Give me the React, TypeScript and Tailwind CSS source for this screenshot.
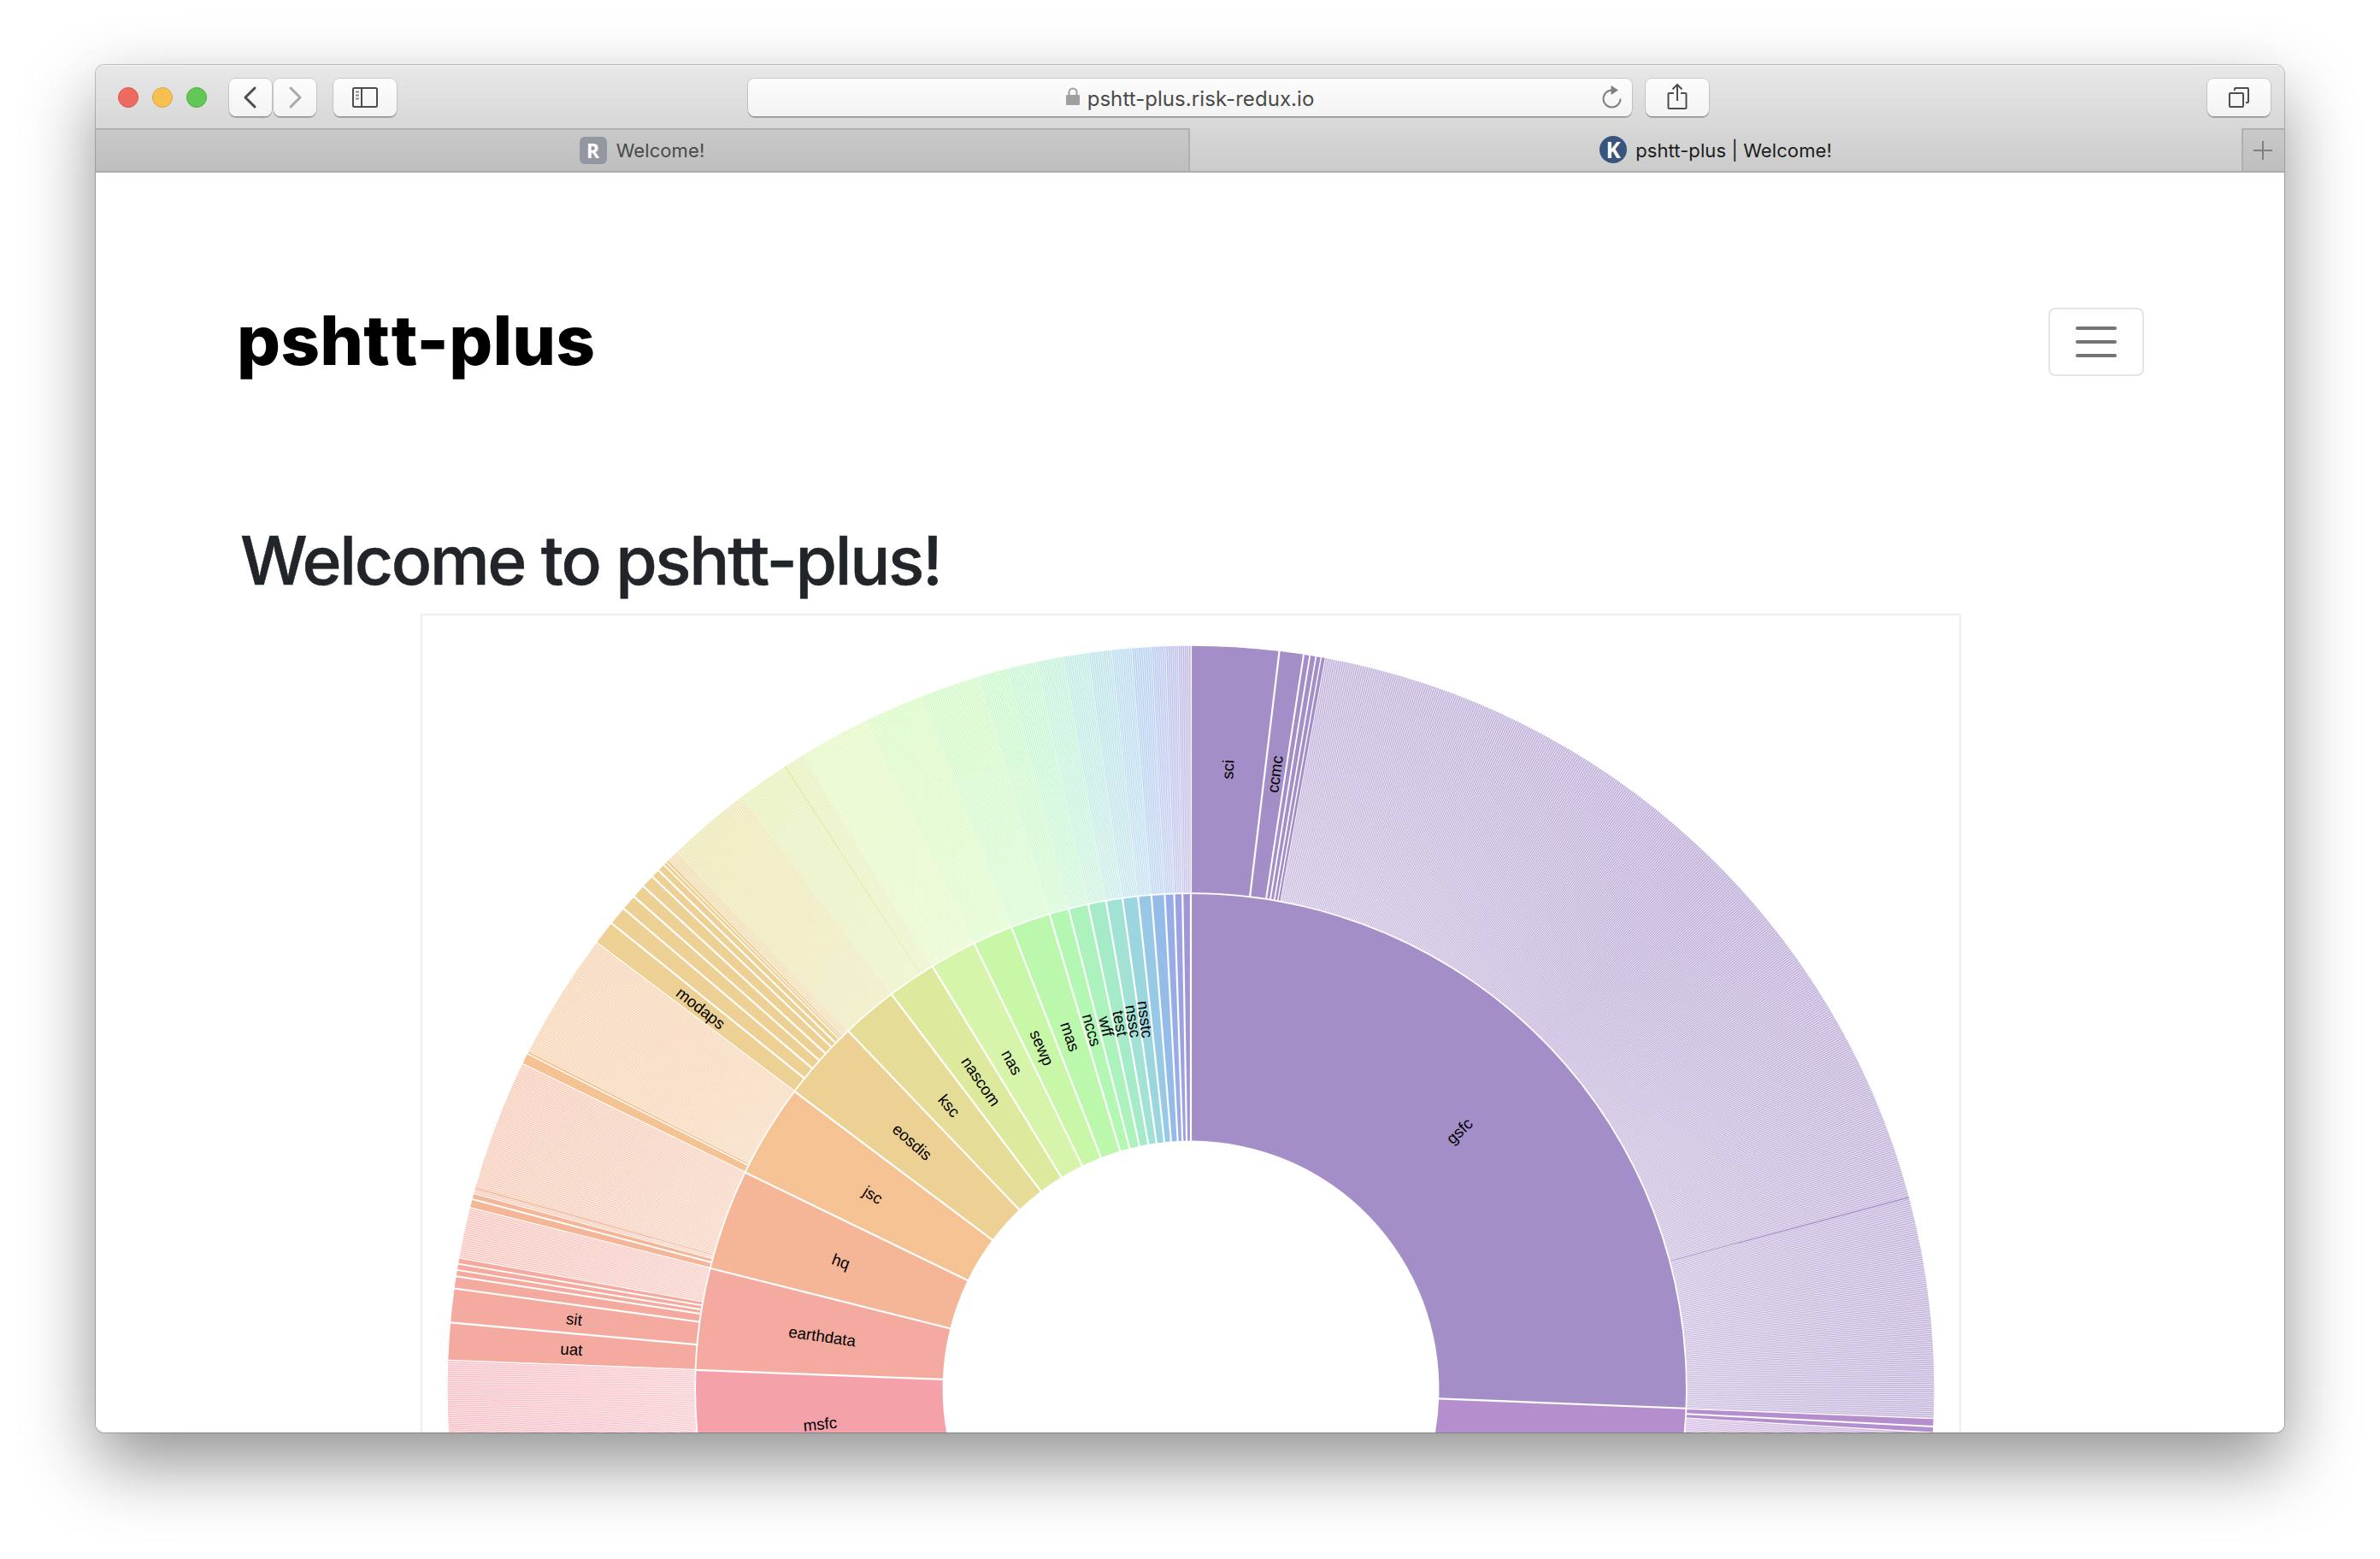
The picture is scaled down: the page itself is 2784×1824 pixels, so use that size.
import type { ReactNode } from "react";

type Rgb = [number, number, number];

const RADIUS = 290.4;
const GAP = 1.87;
const PAD_RADIUS = RADIUS * 1.5;
const LEAF_DEG = 0.16304;
const COLOR_COUNT = 26;
const RAD = Math.PI / 180;

/** Cyclic cubehelix rainbow, t in [0, 1]. */
function rainbow(t: number): Rgb {
  const ts = Math.abs(t - 0.5);
  const h = (360 * t - 100 + 120) * RAD;
  const s = 1.5 - 1.5 * ts;
  const l = 0.8 - 0.9 * ts;
  const a = s * l * (1 - l);
  const c = Math.cos(h);
  const n = Math.sin(h);
  return [
    l + a * (-0.14861 * c + 1.78277 * n),
    l + a * (-0.29227 * c - 0.90649 * n),
    l + a * (1.97294 * c),
  ];
}

const toLinear = (v: number) => (v <= 0.04045 ? v / 12.92 : Math.pow((v + 0.055) / 1.055, 2.4));
const toGamma = (v: number) => (v <= 0.0031308 ? v * 12.92 : 1.055 * Math.pow(v, 1 / 2.4) - 0.055);

/** Slice colour, muted into the wide-gamut display space. */
function sliceColor(index: number): string {
  const [r, g, b] = rainbow(index / COLOR_COUNT).map((v) => toLinear(Math.min(1, Math.max(0, v))));
  const wide = [0.8225 * r + 0.1774 * g, 0.0332 * r + 0.9669 * g, 0.0171 * r + 0.0724 * g + 0.9108 * b];
  return `rgb(${wide.map((v) => Math.round(255 * toGamma(v))).join(",")})`;
}

const point = (r: number, a: number) => `${(r * Math.sin(a)).toFixed(3)},${(-r * Math.cos(a)).toFixed(3)}`;

/** Annular sector, padded unless told otherwise; angles in degrees clockwise from twelve o'clock. */
function arc(a0: number, a1: number, ring: number, padded = true): string {
  const r0 = RADIUS * ring;
  const r1 = RADIUS * (ring + 1) - GAP;
  const x0 = a0 * RAD;
  const x1 = a1 * RAD;
  const half = padded ? Math.min((x1 - x0) / 2, 0.005) / 2 : 0;
  const pi = Math.asin((PAD_RADIUS / r0) * Math.sin(half));
  const po = Math.asin((PAD_RADIUS / r1) * Math.sin(half));
  return `M${point(r1, x0 + po)}A${r1},${r1} 0 0 1 ${point(r1, x1 - po)}L${point(r0, x1 - pi)}A${r0},${r0} 0 0 0 ${point(r0, x0 + pi)}Z`;
}

/** Radial separators between the single-host leaves of a run. */
function separators(a0: number, a1: number): string {
  const count = Math.max(1, Math.round((a1 - a0) / LEAF_DEG));
  const step = (a1 - a0) / count;
  let d = "";
  for (let i = 0; i <= count; i++) {
    const a = (a0 + i * step) * RAD;
    d += `M${point(RADIUS * 2, a)}L${point(RADIUS * 3 - GAP, a)}`;
  }
  return d;
}

interface Slice {
  index: number;
  from: number;
  to: number;
  name?: string;
  groups?: { from: number; to: number; name?: string }[];
}

const slices: Slice[] = [
  {
    index: 0, from: 0, to: 92.25, name: "gsfc",
    groups: [
      { from: 0, to: 6.84, name: "sci" },
      { from: 6.84, to: 8.74, name: "ccmc" },
      { from: 8.74, to: 9.22 },
      { from: 9.22, to: 9.7 },
      { from: 9.7, to: 10.1 },
      { from: 10.1, to: 10.43 },
      { from: 74.98, to: 75.14 },
    ],
  },
  { index: 1, from: 92.25, to: 120, groups: [{ from: 92.25, to: 92.9 }, { from: 92.9, to: 93.4 }] },
  { index: 6, from: 257, to: 272.19, name: "msfc" },
  {
    index: 7, from: 272.19, to: 284.1, name: "earthdata",
    groups: [
      { from: 272.19, to: 275.12, name: "uat" },
      { from: 275.12, to: 277.77, name: "sit" },
      { from: 277.77, to: 278.72 },
      { from: 278.72, to: 279.21 },
      { from: 279.21, to: 279.7 },
      { from: 279.7, to: 280.16 },
    ],
  },
  {
    index: 8, from: 284.1, to: 295.92, name: "hq",
    groups: [{ from: 284.1, to: 284.8 }, { from: 284.8, to: 285.26 }, { from: 285.59, to: 285.76 }],
  },
  {
    index: 9, from: 295.92, to: 306.89, name: "jsc",
    groups: [{ from: 295.92, to: 296.83 }, { from: 296.83, to: 297.04 }],
  },
  {
    index: 10, from: 306.89, to: 316.25, name: "eosdis",
    groups: [
      { from: 306.89, to: 308.8, name: "modaps" },
      { from: 308.8, to: 310.26 },
      { from: 310.26, to: 311.49 },
      { from: 311.49, to: 312.56 },
      { from: 312.56, to: 313.57 },
      { from: 313.57, to: 314.25 },
      { from: 314.25, to: 314.86 },
      { from: 314.86, to: 315.12 },
      { from: 315.12, to: 315.38 },
    ],
  },
  { index: 11, from: 316.25, to: 322.82, name: "ksc" },
  { index: 12, from: 322.82, to: 328.55, name: "nascom", groups: [{ from: 326.82, to: 326.98 }] },
  { index: 13, from: 328.55, to: 334.06, name: "nas" },
  { index: 14, from: 334.06, to: 338.77, name: "sewp" },
  { index: 15, from: 338.77, to: 343.42, name: "mas" },
  { index: 16, from: 343.42, to: 345.71, name: "nccs" },
  { index: 17, from: 345.71, to: 348.03, name: "wff" },
  { index: 18, from: 348.03, to: 350.13, name: "test" },
  { index: 19, from: 350.13, to: 352.06, name: "nssc" },
  { index: 20, from: 352.06, to: 353.87, name: "nsstc" },
  { index: 21, from: 353.87, to: 355.43 },
  { index: 22, from: 355.43, to: 356.97 },
  { index: 23, from: 356.97, to: 358.07 },
  { index: 24, from: 358.07, to: 359.03 },
  { index: 25, from: 359.03, to: 360 },
];

/** Stretches of the outer ring that hold leaves instead of groups. */
function leafRuns(slice: Slice): [number, number][] {
  let cursor = slice.from;
  const out: [number, number][] = [];
  for (const g of slice.groups ?? []) {
    if (g.from - cursor > 0.05) out.push([cursor, g.from]);
    cursor = g.to;
  }
  if (slice.to - cursor > 0.05) out.push([cursor, slice.to]);
  return out;
}

function Label({ from, to, ring, children }: { from: number; to: number; ring: number; children: ReactNode }) {
  const mid = (from + to) / 2;
  return (
    <text
      dy="0.35em"
      textAnchor="middle"
      transform={`rotate(${mid - 90}) translate(${(ring + 0.5) * RADIUS},0) rotate(${mid < 180 ? 0 : 180})`}
    >
      {children}
    </text>
  );
}

function Sunburst() {
  return (
    <svg width="1798" height="956" viewBox="-899 -905 1798 956" className="block font-['Liberation_Sans',sans-serif] text-[18.7px]">
      {slices.map((s) => (
        <g key={s.index} fill={sliceColor(s.index)}>
          <path d={arc(s.from, s.to, 1)} fillOpacity={0.6} />
          {leafRuns(s).map(([a, b]) => (
            <g key={a}>
              <path d={arc(a, b, 2, false)} fillOpacity={0.4} />
              <path d={separators(a, b)} fill="none" stroke="#fff" strokeWidth={0.68} />
            </g>
          ))}
          {s.groups?.map((g) => <path key={g.from} d={arc(g.from, g.to, 2)} fillOpacity={0.6} />)}
        </g>
      ))}
      <g fill="#000">
        {slices.map((s) => (
          <g key={s.index}>
            {s.name && <Label from={s.from} to={s.to} ring={1}>{s.name}</Label>}
            {s.groups?.map((g) => g.name && <Label key={g.name} from={g.from} to={g.to} ring={2}>{g.name}</Label>)}
          </g>
        ))}
      </g>
    </svg>
  );
}

function ToolButton({ className, children }: { className: string; children: ReactNode }) {
  return (
    <div
      className={`flex h-[44px] items-center justify-center rounded-[8px] bg-linear-to-b from-[#fdfdfd] to-[#f3f3f3] shadow-[0_0_0_1px_rgba(0,0,0,0.13),0_2px_0_rgba(0,0,0,0.22)] ${className}`}
    >
      {children}
    </div>
  );
}

function Toolbar() {
  return (
    <div className="flex h-[74px] items-start pt-4 pl-[26px] text-[#4d4d4d]">
      <div className="flex h-[44px] items-center gap-4">
        <div className="size-6 rounded-full border border-[#d9574b] bg-[#ed6b60]" />
        <div className="size-6 rounded-full border border-[#dba53f] bg-[#f5c150]" />
        <div className="size-6 rounded-full border border-[#50ac42] bg-[#62c756]" />
      </div>
      <ToolButton className="ml-[26px] w-[50px]">
        <svg width="24" height="30" viewBox="0 0 24 30" fill="none" stroke="#4d4d4d" strokeWidth="3" strokeLinecap="round" strokeLinejoin="round">
          <path d="M17 4 6 15l11 11" />
        </svg>
      </ToolButton>
      <ToolButton className="ml-0.5 w-[50px]">
        <svg width="24" height="30" viewBox="0 0 24 30" fill="none" stroke="#a9a9a9" strokeWidth="3" strokeLinecap="round" strokeLinejoin="round">
          <path d="M7 4l11 11L7 26" />
        </svg>
      </ToolButton>
      <ToolButton className="ml-5 w-[74px]">
        <svg width="30" height="24" viewBox="0 0 30 24" fill="none" stroke="#4d4d4d" strokeWidth="2">
          <rect x="1" y="1" width="28" height="22" rx="1.5" />
          <path d="M11 1v22" />
          <path d="M4 5.5h4M4 9.5h4M4 13.5h4" stroke="#8a8a8a" />
        </svg>
      </ToolButton>
      <ToolButton className="relative ml-[411px] w-[1034px]">
        <svg width="16" height="22" viewBox="0 0 16 22" className="-mt-0.5 mr-[9px]">
          <path d="M3.5 10V6a4.5 4.5 0 0 1 9 0v4" fill="none" stroke="#a0a0a0" strokeWidth="2" />
          <rect x="0" y="9" width="16" height="12" rx="1" fill="#a0a0a0" />
        </svg>
        <span className="pt-[3px] font-['Inter',sans-serif] text-[24px] leading-[41px] tracking-[0.06px] whitespace-nowrap text-[#4a4a4a]">pshtt-plus.risk-redux.io</span>
        <svg width="26" height="28" viewBox="0 0 26 28" className="absolute top-[8px] right-[11px]">
          <path d="M13.5 5.5a10 10 0 1 0 10 10" fill="none" stroke="#808080" strokeWidth="2" />
          <path d="M12.5 0v11l8.500-5.500z" fill="#808080" />
        </svg>
      </ToolButton>
      <ToolButton className="ml-4 w-[74px]">
        <svg width="24" height="32" viewBox="0 0 24 32" className="-mt-0.5" fill="none" stroke="#4d4d4d" strokeWidth="2">
          <path d="M8 12H2.500a1 1 0 0 0-1 1v16a1 1 0 0 0 1 1h19a1 1 0 0 0 1-1V13a1 1 0 0 0-1-1H16M12 21V2M6.500 7.500 12 2l5.500 5.500" />
        </svg>
      </ToolButton>
      <ToolButton className="ml-[583px] w-[74px]">
        <svg width="26" height="26" viewBox="0 0 26 26" fill="none" stroke="#4d4d4d" strokeWidth="2">
          <rect x="2" y="8" width="16" height="16" rx="1" />
          <path d="M8 5V3a1 1 0 0 1 1-1h14a1 1 0 0 1 1 1v15a1 1 0 0 1-1 1h-2" />
        </svg>
      </ToolButton>
    </div>
  );
}

function TabBar() {
  return (
    <div className="flex h-[52px] border-b-2 border-[#acacac] font-['Inter',sans-serif] text-[22px] tracking-[0.1px]">
      <div className="flex w-[1280px] items-center justify-center border-t-2 border-r-2 border-[#b0b0b0] bg-linear-to-b from-[#c9c9c9] to-[#bebebe] text-[#4a4a4a]">
        <div className="mr-[11px] flex size-8 items-center justify-center rounded-[6px] bg-[#9497a1] font-['Open_Sans',sans-serif] text-[23px] font-bold text-white">R</div>
        <span className="pt-px">Welcome!</span>
      </div>
      <div className="flex flex-1 items-center justify-center text-[#1c1c1c]">
        <div className="mr-[10px] flex size-8 items-center justify-center rounded-full bg-[#37557f] font-['Open_Sans',sans-serif] text-[26px] font-bold text-white">K</div>
        <span className="pt-0.5">pshtt-plus | Welcome!</span>
      </div>
      <div className="flex w-[50px] items-center justify-center border-t-2 border-l-2 border-[#b0b0b0] bg-linear-to-b from-[#c9c9c9] to-[#bebebe] pr-0.5">
        <svg width="22" height="22" viewBox="0 0 22 22" stroke="#808080" strokeWidth="2">
          <path d="M11 0v22M0 11h22" />
        </svg>
      </div>
    </div>
  );
}

export default function App() {
  return (
    <div className="h-[1824px] w-[2784px] overflow-hidden bg-white pt-[76px] pl-[112px]">
      <div className="h-[1600px] w-[2560px] rounded-[10px] shadow-[0_0_0_1px_rgba(0,0,0,0.22),0_36px_84px_rgba(0,0,0,0.43)]">
        <div className="flex h-full flex-col overflow-hidden rounded-[10px] bg-white">
          <header className="shrink-0 bg-linear-to-b from-[#e8e8e8] to-[#cbcbcb] shadow-[inset_0_1px_0_#f6f6f6]">
            <Toolbar />
            <TabBar />
          </header>
          <main className="flex flex-col">
            <nav className="flex h-[396px] items-start justify-between pt-[158px] pr-[164px] pl-[165px]">
              <span className="-mt-3 font-['Inter',sans-serif] text-[80px] leading-[100px] font-extrabold tracking-[0.2px] whitespace-nowrap text-black">
                psh<span className="tracking-[2px]">t</span>t-plus
              </span>
              <div className="flex h-[80px] w-[112px] flex-col items-center justify-center gap-3 rounded-[8px] border-2 border-[#e5e5e5]">
                <div className="h-1 w-12 rounded-full bg-[#757575]" />
                <div className="h-1 w-12 rounded-full bg-[#757575]" />
                <div className="h-1 w-12 rounded-full bg-[#757575]" />
              </div>
            </nav>
            <h1 className="h-[120px] pl-[169px] font-['Inter',sans-serif] text-[78.500px] leading-[116px] font-medium tracking-[-2.3px] whitespace-nowrap text-[#212529] [-webkit-text-stroke:0.5px_#212529]">Welcome to pshtt-plus!</h1>
            <div className="ml-[380px] w-[1802px] border-2 border-b-0 border-[#eeeeee]">
              <Sunburst />
            </div>
          </main>
        </div>
      </div>
    </div>
  );
}
